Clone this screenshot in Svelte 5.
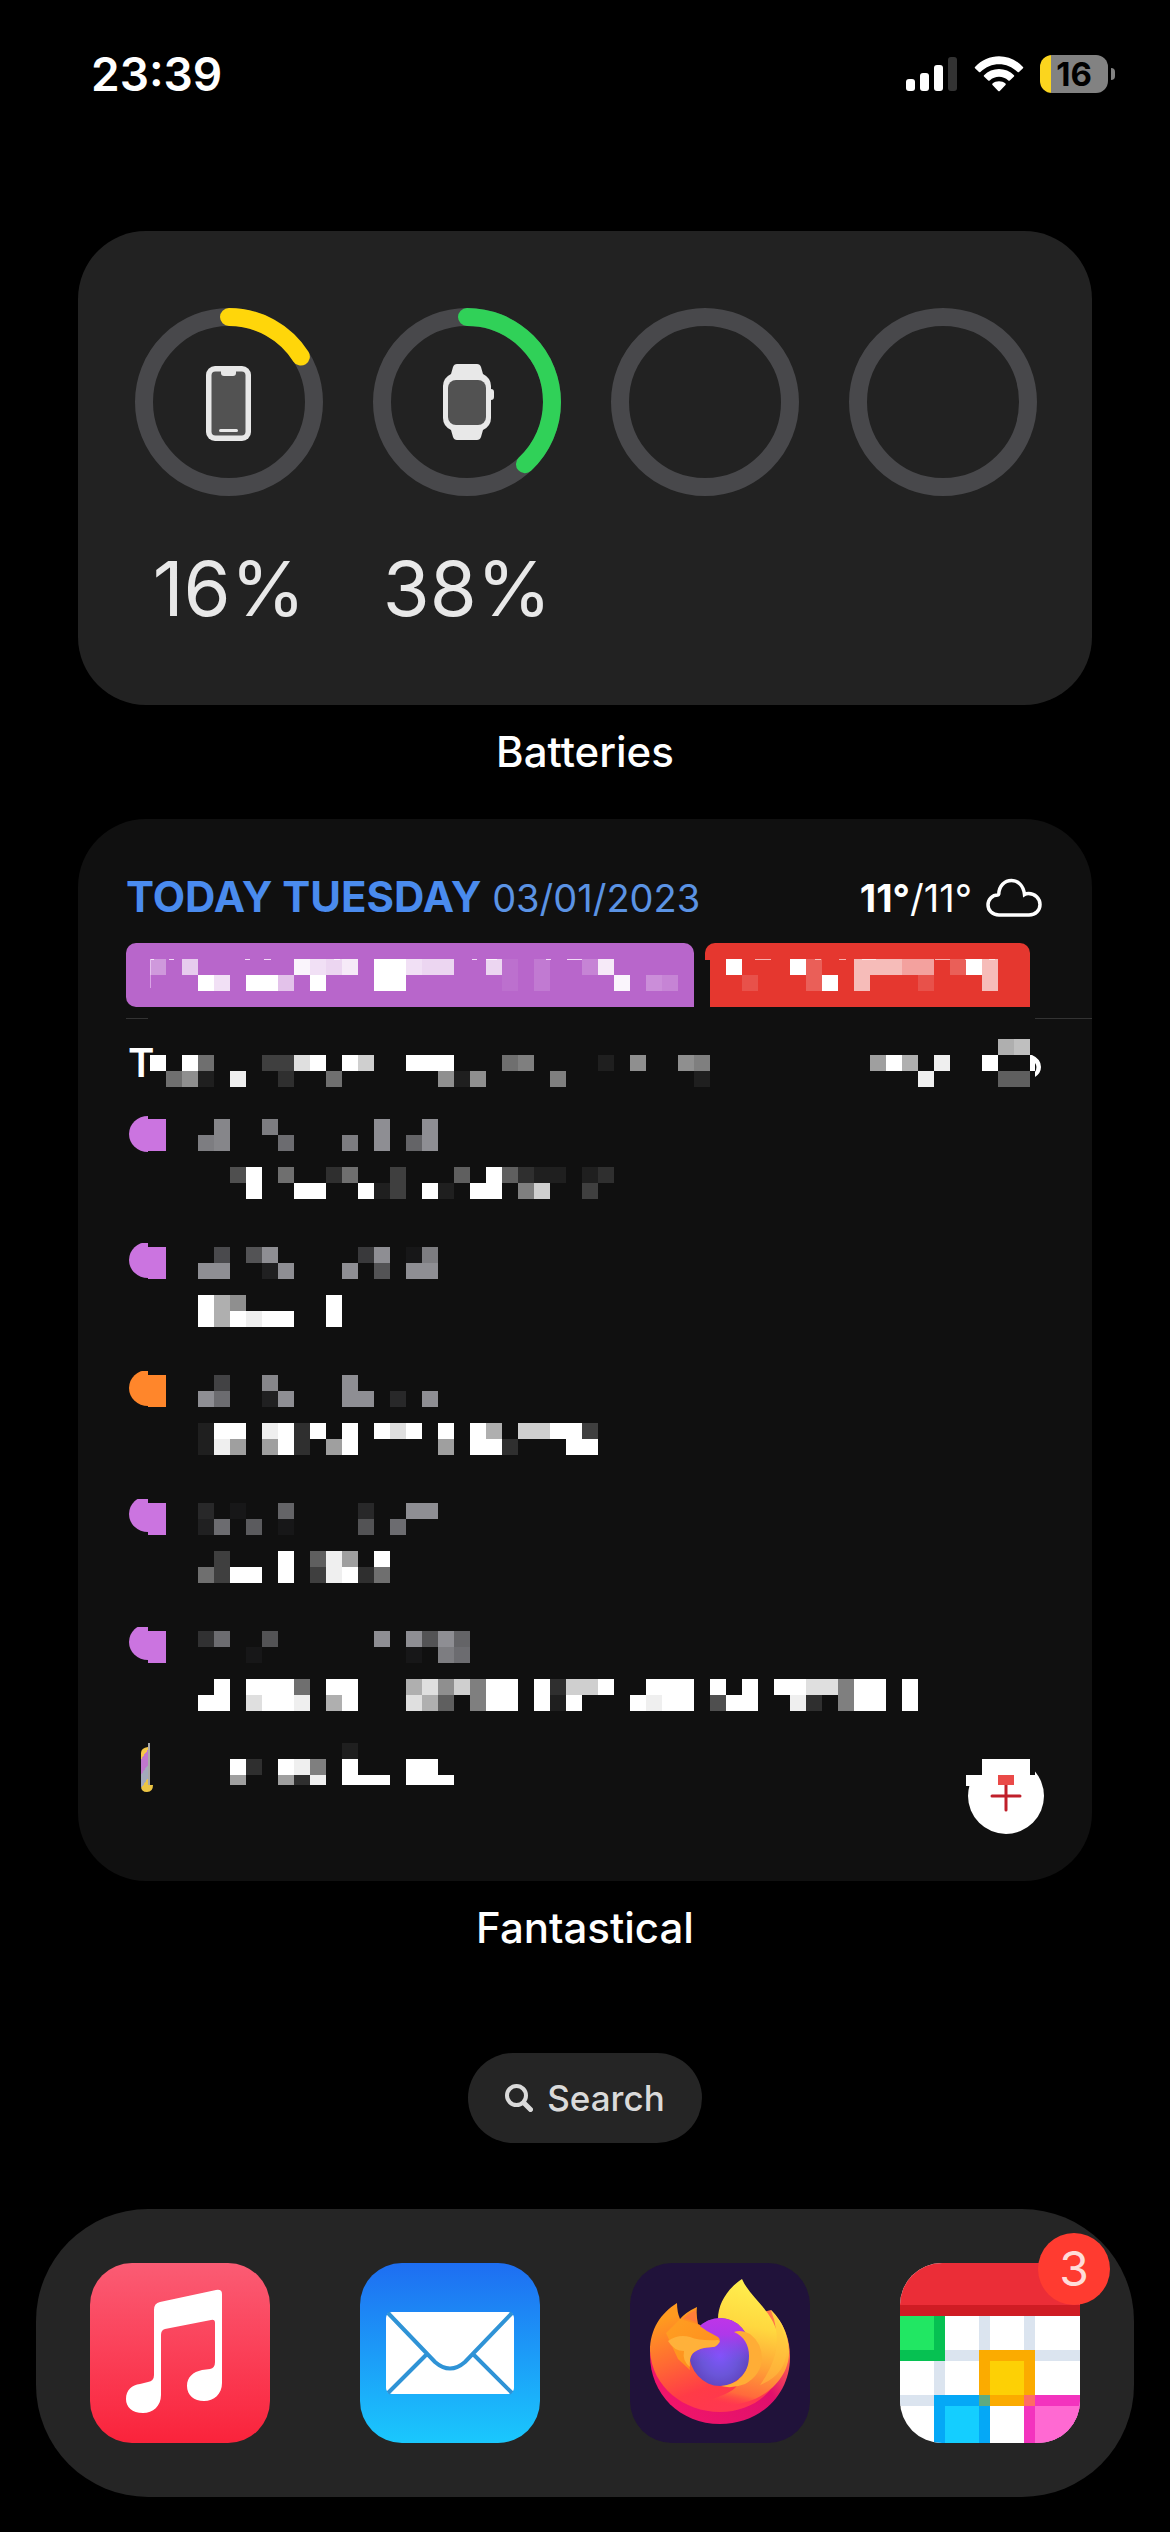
<script>
  const CELL = 16;

  const rings = [
    { kind: 'phone', label: 'iPhone', level: 16, color: '#ffd60a' },
    { kind: 'watch', label: 'Apple Watch', level: 38, color: '#30d158' },
    { kind: null, label: 'Empty slot', level: null, color: null },
    { kind: null, label: 'Empty slot', level: null, color: null }
  ];
  const RING_LENGTH = 2 * Math.PI * 85;

  const banners = {
    purple: ['5.a......ecbd.ffcbb..b1.2..3d', '...fc.ff9.f...ff......1.2....e.43'],
    red: ['.f...f3..aaa88.3fa', '..2...3f.a...2...a']
  };

  const forecastTitle = [
    '',
    'f.f6...33df.fc..fff...67....1.8..87',
    '.681.e..2..6......818....7........1'
  ];
  const forecastTemp = ['........ab', '9fa.e..f', '...e....55'];

  const events = [
    {
      tone: 'purple', dot: 19,
      time: ['.e..d......f..f', 'de...b...d.f.af'],
      title: ['..4f.6..26..3...5.f5211.12', '...f..ff..f13.f1.ff.7c..3']
    },
    {
      tone: 'purple', dot: 17,
      time: ['.7.8f.....5f.1d', 'ff..2f...f.8.ff'],
      title: ['fa8.....f', 'fafeff..f']
    },
    {
      tone: 'orange', dot: 17,
      time: ['.6..e....f', 'fb..2f...ff.3.f'],
      title: ['1ff.ef2f.f.fdf.f.fa.ccff3', '1e9.9f2.9f.....9.ff2...ff']
    },
    {
      tone: 'purple', dot: 15,
      time: ['3.1..a....3..ff', '2b.9.1....8.b'],
      title: ['.3...f.5e9.f', '63ff.f.3ef26']
    },
    {
      tone: 'purple', dot: 15,
      time: ['4b..8......f.f8fa', '...1.........1.db'],
      title: [
        '.f.fff6.ff...ad8c7ff.f2ccf..fff.f.f.ffdd7ff.f',
        'ff.dffe.af...da5.7ff.f1f...feff.4ff..e2.7ff.f'
      ]
    }
  ];
  const lastTitle = ['.........1', '..f2.fe7.f...ff', '..9..92e.fff.fff'];

  function cellsOf(rows) {
    return rows.flatMap((row, y) =>
      [...row].flatMap((c, x) =>
        c === '.' ? [] : [{ x: x * CELL, y: y * CELL, o: parseInt(c, 16) / 15 }]
      )
    );
  }
  const columns = (rows) => Math.max(...rows.map((r) => r.length)) * CELL;
</script>

{#snippet mosaic(rows, height = rows.length * CELL)}
  <svg class="mosaic" width={columns(rows)} {height} aria-hidden="true" shape-rendering="crispEdges">
    {#each cellsOf(rows) as c}
      <rect x={c.x} y={c.y} width={CELL} height={CELL} fill="currentColor" fill-opacity={c.o} />
    {/each}
  </svg>
{/snippet}

<main class="screen">
  <header class="status">
    <time class="clock">23:39</time>
    <div class="indicators">
      <svg width="52" height="36" viewBox="0 0 52 36" aria-label="Signal">
        <rect x="0" y="23" width="9" height="12" rx="3" fill="#fff" />
        <rect x="14" y="17" width="9" height="18" rx="3" fill="#fff" />
        <rect x="28" y="9" width="9" height="26" rx="3" fill="#fff" />
        <rect x="42" y="1" width="9" height="34" rx="3" fill="#333" />
      </svg>
      <svg width="50" height="36" viewBox="0 0 50 36" aria-label="Wi-Fi">
        <g fill="#fff">
          <path d="M1 11C14-3.500 36-3.500 49 11Q49.500 11.700 49 12.300L45 16Q44.300 16.600 43.600 16C33 5.500 17 5.500 6.400 16Q5.700 16.600 5 16L1 12.300Q.5 11.700 1 11Z" />
          <path d="M10 19.200C18 11 32 11 40 19.200Q40.600 20 40 20.600L35.800 24.500Q35 25 34.300 24.500C29 19.500 21 19.500 15.700 24.500Q15 25 14.200 24.500L10 20.600Q9.400 20 10 19.200Z" />
          <path d="M18.500 27.500C22 24.500 28 24.500 31.500 27.500Q32.200 28.300 31.500 29L25.800 35Q25 35.700 24.200 35L18.500 29Q17.800 28.300 18.500 27.500Z" />
        </g>
      </svg>
      <div class="battery"><span class="cell">16</span><span class="nub"></span></div>
    </div>
  </header>

  <section class="widget batteries" aria-labelledby="batteries-label">
    {#each rings as ring}
      <div class="device">
        <svg width="188" height="188" viewBox="0 0 188 188" aria-label={ring.label}>
          <circle cx="94" cy="94" r="85" fill="none" stroke="#48484b" stroke-width="18" />
          {#if ring.level}
            <circle
              cx="94" cy="94" r="85" fill="none" stroke={ring.color} stroke-width="18"
              stroke-linecap="round" transform="rotate(-90 94 94)"
              stroke-dasharray="{(RING_LENGTH * ring.level) / 100} {RING_LENGTH}"
            />
          {/if}
          {#if ring.kind === 'phone'}
            <rect x="71" y="58" width="45" height="75" rx="9" fill="#e8e8e8" />
            <rect x="76.500" y="63.500" width="34" height="64" rx="4" fill="#525252" />
            <path d="M86 63H101V65Q101 68 98 68H89Q86 68 86 65Z" fill="#e8e8e8" />
            <rect x="84" y="121" width="19" height="3" rx="1.500" fill="#e8e8e8" />
          {:else if ring.kind === 'watch'}
            <path d="M84 56H104Q107 56 108 59L110 66Q118 70 118 78V81Q121 81 121 84V89Q121 92 118 92V110Q118 118 110 122L108 129Q107 132 104 132H84Q81 132 80 129L78 122Q70 118 70 110V78Q70 70 78 66L80 59Q81 56 84 56Z" fill="#e8e8e8" />
            <rect x="75" y="72" width="38" height="45" rx="8" fill="#525252" />
          {/if}
        </svg>
        {#if ring.level}<span class="percent">{ring.level}%</span>{/if}
      </div>
    {/each}
  </section>
  <h2 class="caption" id="batteries-label">Batteries</h2>

  <section class="widget agenda" aria-labelledby="fantastical-label">
    <div class="day">
      <p class="date"><strong>TODAY TUESDAY</strong> 03/01/2023</p>
      <p class="weather">
        <span><b>11°</b>/11°</span>
        <svg width="56" height="40" viewBox="0 0 56 40" aria-label="Cloudy">
          <path d="M13 37H43C50 37 54 32 54 26.500C54 20.500 49 15.500 42.500 15.500Q40 15.500 38.500 16.500C37.500 7.500 32 2.500 25.500 2.500C18.500 2.500 13 8 12.800 16Q12.600 17 12 17C6 17 2 21.500 2 27C2 32.500 6.500 37 13 37Z" fill="none" stroke="#fff" stroke-width="3.500" />
        </svg>
      </p>
    </div>

    <div class="banners">
      <div class="banner violet">
        <svg class="sliver" width="468" height="31" viewBox="0 0 468 31" aria-hidden="true">
          <path d="M0 .5H4M19 .5H24M95 .5H100M114 .5H121M184 .5H190M230 .5H244M322 .5H327M336 .5H347M396 .5H401M417 .5H432" stroke="#f3dcf8" />
          <path d="M.5 0V29" stroke="#d9a3e6" />
        </svg>
        {@render mosaic(banners.purple)}
      </div>
      <div class="banner scarlet">
        <svg class="sliver" width="290" height="31" viewBox="0 0 290 31" aria-hidden="true">
          <path d="M25 .5H31M45 .5H61M83 .5H89M105 .5H111M129 .5H136M152 .5H166M225 .5H240M255 .5H261M279 .5H285" stroke="#f7b3b0" />
        </svg>
        {@render mosaic(banners.red)}
      </div>
    </div>

    <div class="divider"><span></span><span></span></div>

    <div class="forecast">
      <span class="initial">T</span>
      {@render mosaic(forecastTitle)}
      <div class="forecast-temp">
        {@render mosaic(forecastTemp)}
        <svg width="12" height="48" viewBox="0 0 12 48" aria-hidden="true">
          <path d="M0 16H2Q11 20 11 28Q11 34 5 38V32H0Z" fill="#fff" />
          <path d="M5 24Q8 28 5 33Z" fill="#101010" />
        </svg>
      </div>
    </div>

    <ul class="events">
      {#each events as event}
        <li class="event">
          <svg class={event.tone} width="38" height="40" viewBox="0 0 38 40" aria-hidden="true">
            <path d="M20 {event.dot - 18}V{event.dot + 18}A19 18 0 0 1 20 {event.dot - 18}Z" fill="currentColor" />
            <rect x="20" y="4" width="18" height="32" fill="currentColor" />
          </svg>
          <div class="lines">
            <div class="time">{@render mosaic(event.time)}</div>
            {@render mosaic(event.title)}
          </div>
        </li>
      {/each}
    </ul>

    <div class="last">
      <svg width="38" height="50" viewBox="0 0 38 50" aria-hidden="true">
        <defs>
          <linearGradient id="stick" x1="0" y1="0" x2=".35" y2="1">
            <stop offset=".3" stop-color="#f5c84a" />
            <stop offset=".3" stop-color="#c077cf" />
            <stop offset=".58" stop-color="#c077cf" />
            <stop offset=".58" stop-color="#a3a9bd" />
            <stop offset=".82" stop-color="#a3a9bd" />
            <stop offset=".82" stop-color="#ecc544" />
          </linearGradient>
        </defs>
        <path d="M20 4V0H22V42H25Q25 49 19 49Q13 49 13 43V10Q13 5 20 4Z" fill="url(#stick)" />
        <path d="M21 0V42" stroke="#a9a9a9" stroke-width="2" />
      </svg>
      {@render mosaic(lastTitle, 42)}
      <button class="add" aria-label="Add event">
        <svg width="80" height="91" viewBox="0 0 80 91" aria-hidden="true">
          <clipPath id="disc"><path d="M0 42H70V0H80V91H0Z" /></clipPath>
          <circle cx="41" cy="53" r="38" fill="#fff" clip-path="url(#disc)" />
          <path d="M17 16H65V32H70V43H1V32H17Z" fill="#fff" />
          <path d="M27 53H55M41 42V67" stroke="#c01f2a" stroke-width="3" stroke-linecap="round" />
          <rect x="33" y="32" width="16" height="10" fill="#ea4a48" />
        </svg>
      </button>
    </div>
  </section>
  <h2 class="caption" id="fantastical-label">Fantastical</h2>

  <button class="search">
    <svg width="28" height="28" viewBox="0 0 28 28" aria-hidden="true">
      <circle cx="11.500" cy="11.500" r="9.500" fill="none" stroke="#dadada" stroke-width="4" />
      <path d="M19 19L25.500 25.500" stroke="#dadada" stroke-width="5" stroke-linecap="round" />
    </svg>
    Search
  </button>

  <nav class="dock" aria-label="Dock">
    <a class="app music" href="#music" aria-label="Music">
      <svg viewBox="0 0 180 180" aria-hidden="true">
        <path fill="#fff" d="M64 47Q64 40 70 39L126 27Q132 26 132 31V120C132 131 124 138 114 138C104 138 97 132 97 123C97 114 103 109 112 107L120 106Q125 105 125 99V60Q125 56 121 57L75 66Q71 67 71 72V132C71 143 63 150 53 150C42 150 36 144 36 136C36 127 42 122 50 121L58 119Q64 118 64 112Z" />
      </svg>
    </a>
    <a class="app mail" href="#mail" aria-label="Mail">
      <svg viewBox="0 0 180 180" aria-hidden="true">
        <rect x="26" y="49" width="128" height="82" rx="6" fill="#fff" />
        <path d="M28 50L75 99Q90 112 105 99L152 50M28 130L67 91M152 130L113 91" fill="none" stroke="#2f93d6" stroke-width="4" />
      </svg>
    </a>
    <a class="app firefox" href="#firefox" aria-label="Firefox">
      <svg viewBox="0 0 180 180" aria-hidden="true">
        <defs>
          <linearGradient id="fur" x1=".1" y1=".15" x2=".5" y2="1">
            <stop offset="0" stop-color="#ff9a1f" />
            <stop offset=".4" stop-color="#ff6a33" />
            <stop offset=".75" stop-color="#ff3b47" />
            <stop offset="1" stop-color="#ff3750" />
          </linearGradient>
          <linearGradient id="tail" x1=".45" y1="0" x2=".3" y2="1">
            <stop offset="0" stop-color="#fff04f" />
            <stop offset=".35" stop-color="#ffd83f" />
            <stop offset=".65" stop-color="#ffa436" />
            <stop offset=".9" stop-color="#ff6a3c" />
            <stop offset="1" stop-color="#ff4a42" stop-opacity="0" />
          </linearGradient>
          <linearGradient id="under" x1="0" y1=".5" x2="1" y2="0">
            <stop offset="0" stop-color="#f0156a" />
            <stop offset=".6" stop-color="#e00f6c" />
            <stop offset=".85" stop-color="#ff6a4a" />
            <stop offset="1" stop-color="#ffd04a" />
          </linearGradient>
          <radialGradient id="globe" cx=".5" cy=".55" r=".6">
            <stop offset="0" stop-color="#7f55fb" />
            <stop offset=".5" stop-color="#6a55d8" />
            <stop offset="1" stop-color="#5a3cb0" />
          </radialGradient>
          <linearGradient id="glow" x1=".4" y1="0" x2=".4" y2="1">
            <stop offset="0" stop-color="#bf35e8" />
            <stop offset=".25" stop-color="#ae38ea" />
            <stop offset=".65" stop-color="#8a4af8" stop-opacity="0" />
          </linearGradient>
          <linearGradient id="face" x1="0" y1="0" x2="1" y2="1">
            <stop offset="0" stop-color="#ff9f22" />
            <stop offset="1" stop-color="#ff8a1c" />
          </linearGradient>
        </defs>
        <path fill="url(#under)" d="M141 47C154 60 160 76 160 94C160 132 130 161 90 161C50 161 20 131 20 92C20 86 22 80 24 76Z" />
        <path fill="url(#fur)" d="M47 40Q47 49 50 56Q56 49 67 44Q66 52 68 61L152 100C148 129 122 149 90 149C54 149 22 124 20 88C20 66 31 50 47 40Z" />
        <path fill="url(#tail)" d="M112 16C97 26 88 41 88 56L108 76L105 108C118 124 96 132 76 138C112 152 160 126 159 88C158 71 152 58 141 47Q145 57 146 66C139 45 120 34 112 16Z" />
        <path fill="#ffc33d" opacity=".5" d="M146 66Q151 92 130 122Q156 112 157 86Q155 64 141 47Q145 57 146 66Z" />
        <ellipse cx="90" cy="89" rx="31" ry="34" fill="url(#globe)" />
        <ellipse cx="90" cy="89" rx="31" ry="34" fill="url(#glow)" />
        <path fill="#ffad36" d="M104 69Q112 66 120 71Q132 80 132 96Q131 112 115 121Q102 126 91 123C111 121 119 108 119 93C119 82 114 73 104 69Z" />
        <path fill="url(#face)" d="M67 61Q77 69 88 74Q91 77 89 79Q86 84 83 84Q68 84 62 91Q57 97 60 107L48 96L36 70L50 56Z" />
        <path fill="#ffb13a" d="M38 78Q48 71 60 74Q70 78 88 77Q91 78 89 80Q86 84 83 84Q70 84 63 90Q59 95 60 104Q52 98 54 88Q44 88 38 78Z" />
        <path fill="#ff6f4a" opacity=".6" d="M53 56Q58 50 66 47Q65 54 67 60Q61 56 53 56Z" />
      </svg>
    </a>
    <a class="app calendar" href="#fantastical" aria-label="Fantastical, 3 notifications">
      <svg viewBox="0 0 180 180" aria-hidden="true" shape-rendering="crispEdges">
        <rect width="180" height="180" fill="#fff" />
        <rect width="180" height="42" fill="#eb2d37" />
        <rect y="42" width="180" height="11" fill="#cf1c24" />
        <path d="M34 53H45V180H34ZM79 53H90V180H79ZM124 53H135V180H124ZM0 87H180V98H0ZM0 132H180V143H0Z" fill="#dbe4ef" />
        <rect y="53" width="45" height="45" fill="#06c152" />
        <rect y="53" width="34" height="34" fill="#21e763" />
        <rect x="34" y="132" width="56" height="48" fill="#05a8f6" />
        <rect x="45" y="143" width="34" height="37" fill="#14ceff" />
        <rect x="124" y="132" width="56" height="48" fill="#f333be" />
        <rect x="135" y="143" width="45" height="37" fill="#ff69d2" />
        <rect x="79" y="87" width="56" height="56" fill="#fbab00" />
        <rect x="90" y="98" width="34" height="34" fill="#fdd005" />
        <rect x="79" y="132" width="11" height="11" fill="#60aa80" />
        <rect x="124" y="132" width="11" height="11" fill="#ff6c64" />
      </svg>
      <span class="badge">3</span>
    </a>
  </nav>
</main>

<style>
  :global(body) {
    background: #000;
  }
  .screen {
    display: flex;
    flex-direction: column;
    box-sizing: border-box;
    min-height: 100vh;
    padding-bottom: 36px;
    background: #000;
    color: #fff;
    font-family: Inter, "Liberation Sans", sans-serif;
  }
  svg {
    display: block;
    flex: none;
  }
  p, h2, ul {
    margin: 0;
    padding: 0;
  }
  button {
    border: 0;
    padding: 0;
    font: inherit;
    color: inherit;
    background: none;
  }

  .status {
    display: flex;
    justify-content: space-between;
    align-items: center;
    height: 148px;
    margin-bottom: 83px;
    padding: 0 55px 0 91px;
  }
  .clock {
    font-size: 46px;
    font-weight: 600;
    line-height: 56px;
  }
  .indicators {
    display: flex;
    align-items: center;
    gap: 16px;
  }
  .battery {
    display: flex;
    align-items: center;
    gap: 3px;
  }
  .cell {
    width: 68px;
    border-radius: 12px;
    background: linear-gradient(90deg, #fbd51e 11px, #828282 11px);
    color: #000;
    font-size: 33px;
    font-weight: 700;
    line-height: 38px;
    text-align: center;
  }
  .nub {
    width: 4px;
    height: 12px;
    border-radius: 0 4px 4px 0;
    background: #828282;
  }

  .widget {
    margin: 0 78px;
    border-radius: 68px;
  }
  .caption {
    font-size: 42px;
    font-weight: 500;
    line-height: 48px;
    text-align: center;
  }

  .batteries {
    display: flex;
    justify-content: space-between;
    box-sizing: border-box;
    height: 474px;
    padding: 77px 55px 0 57px;
    background: #222;
  }
  .batteries + .caption {
    margin: 23px 0 43px;
  }
  .device {
    display: flex;
    flex-direction: column;
    align-items: center;
    gap: 44px;
    width: 188px;
  }
  .percent {
    color: #e8e8e8;
    font-size: 76px;
    font-weight: 400;
    line-height: 96px;
  }

  .agenda {
    background: #101010;
  }
  .agenda + .caption {
    margin: 23px 0 101px;
  }
  .day {
    display: flex;
    justify-content: space-between;
    align-items: center;
    padding: 52px 50px 19px 48px;
  }
  .date {
    color: #5b93e4;
    font-size: 38px;
    line-height: 52px;
    white-space: nowrap;
  }
  .date strong {
    color: #4a8bee;
    font-size: 42px;
    font-weight: 700;
  }
  .weather {
    display: flex;
    align-items: center;
    gap: 14px;
    font-size: 38px;
    line-height: 40px;
  }

  .banners {
    display: grid;
    grid-template-columns: 568fr 325fr;
    gap: 11px;
    padding: 0 62px 0 48px;
  }
  .banner {
    display: grid;
    align-content: start;
    box-sizing: border-box;
    height: 64px;
    padding-top: 16px;
    overflow: hidden;
  }
  .banner > :global(*) {
    grid-area: 1 / 1;
  }
  .violet {
    padding-left: 24px;
    border-radius: 10px 10px 0 10px;
    background: #b866cb;
  }
  .scarlet {
    padding-left: 5px;
    border-radius: 10px 10px 0 0;
    background:
      linear-gradient(#e5372f, #e5372f) 0 0 / 100% 17px no-repeat,
      linear-gradient(#e5372f, #e5372f) 5px 17px / 100% 47px no-repeat;
  }

  .divider {
    display: flex;
    justify-content: space-between;
    padding: 11px 0 20px 48px;
  }
  .divider span {
    width: 22px;
    height: 1px;
    background: #333;
  }
  .divider span:last-child {
    width: 57px;
  }

  .forecast {
    display: flex;
    padding: 0 50px;
  }
  .initial {
    width: 22px;
    font-size: 40px;
    font-weight: 600;
    line-height: 48px;
  }
  .forecast-temp {
    display: flex;
    margin-left: auto;
  }

  .events {
    display: flex;
    flex-direction: column;
    gap: 44px;
    padding: 28px 50px 0;
    list-style: none;
  }
  .event {
    display: flex;
    gap: 32px;
  }
  .lines {
    display: flex;
    flex-direction: column;
    gap: 16px;
    padding-top: 4px;
  }
  .time {
    color: #8e8e93;
  }
  .purple {
    color: #cb74e0;
  }
  .orange {
    color: #ff862b;
  }
  .last {
    display: flex;
    align-items: flex-start;
    gap: 32px;
    padding: 32px 47px 47px 50px;
  }
  .add {
    margin-left: auto;
  }

  .search {
    display: flex;
    align-items: center;
    align-self: center;
    gap: 14px;
    height: 90px;
    margin-bottom: 66px;
    padding: 0 37px;
    border-radius: 45px;
    background: #252525;
    color: #dadada;
    font-size: 35px;
    font-weight: 500;
  }

  .dock {
    display: flex;
    justify-content: space-between;
    align-items: center;
    height: 288px;
    margin: 0 36px;
    padding: 0 54px;
    border-radius: 112px;
    background: #252525;
  }
  .app {
    position: relative;
    width: 180px;
    height: 180px;
    border-radius: 42px;
    color: #fff;
    text-decoration: none;
  }
  .app svg {
    width: 100%;
    border-radius: 42px;
  }
  .music {
    background: linear-gradient(#fb5c74, #fa233b);
  }
  .mail {
    background: linear-gradient(#1e6ef2, #1ac8fd);
  }
  .firefox {
    background: #20123a;
  }
  .badge {
    position: absolute;
    top: -30px;
    right: -30px;
    width: 72px;
    border-radius: 36px;
    background: #ff3b30;
    color: #ffdcd9;
    font-size: 48px;
    line-height: 72px;
    text-align: center;
  }
</style>
